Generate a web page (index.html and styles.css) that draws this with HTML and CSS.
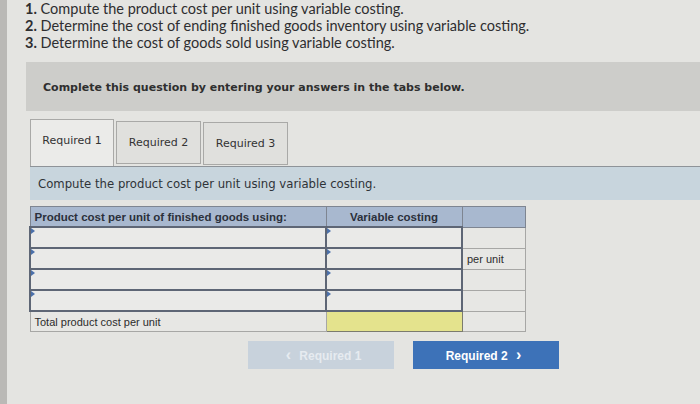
FILE: index.html
```html
<!DOCTYPE html>
<html lang="en">
<head>
    <meta charset="UTF-8">
    <title>Variable Costing</title>
    <link rel="stylesheet" href="styles.css">
</head>
<body>
<div class="page">

    <!-- Question parts -->
    <ol class="parts">
        <li><b>1.</b> Compute the product cost per unit using variable costing.</li>
        <li><b>2.</b> Determine the cost of ending finished goods inventory using variable costing.</li>
        <li><b>3.</b> Determine the cost of goods sold using variable costing.</li>
    </ol>

    <div class="notice">Complete this question by entering your answers in the tabs below.</div>

    <!-- Tabs -->
    <div class="tabs">
        <div class="tab active">Required 1</div>
        <div class="tab tab-2">Required 2</div>
        <div class="tab tab-3">Required 3</div>
    </div>

    <div class="prompt">Compute the product cost per unit using variable costing.</div>

    <!-- Answer table -->
    <table class="answer">
        <tr class="head">
            <th class="c1">Product cost per unit of finished goods using:</th>
            <th class="c2">Variable costing</th>
            <th class="c3"></th>
        </tr>
        <tr>
            <td class="in"></td>
            <td class="in"></td>
            <td class="c3"></td>
        </tr>
        <tr>
            <td class="in"></td>
            <td class="in"></td>
            <td class="c3">per unit</td>
        </tr>
        <tr>
            <td class="in"></td>
            <td class="in"></td>
            <td class="c3"></td>
        </tr>
        <tr>
            <td class="in"></td>
            <td class="in"></td>
            <td class="c3"></td>
        </tr>
        <tr class="total">
            <td class="c1">Total product cost per unit</td>
            <td class="sum"></td>
            <td class="c3"></td>
        </tr>
    </table>

    <!-- Navigation -->
    <div class="nav">
        <button class="prev" disabled><span class="chev">&lsaquo;</span> Required 1</button>
        <button class="next">Required 2 <span class="chev">&rsaquo;</span></button>
    </div>

</div>
</body>
</html>
```

FILE: styles.css
```css
/* General */
body {
    margin: 0;
    background: #e4e4e1;
    color: #2d2d2d;
    font-family: Lato, "Open Sans", sans-serif;
    overflow: hidden;
}

.page {
    border-left: 7px solid #bab9b6;
    height: 404px;
}

/* Question parts */
.parts {
    list-style: none;
    margin: 0;
    padding: 0 0 0 18px;
    font-size: 14.5px;
    line-height: 17px;
    color: #2e2e30;
}

.parts b {
    font-weight: 700;
}

/* Gray notice box */
.notice {
    margin: 11px 0 0 19px;
    height: 49px;
    padding-left: 17px;
    background: #cdcdca;
    font-family: "DejaVu Sans", Verdana, sans-serif;
    font-size: 11px;
    font-weight: bold;
    line-height: 52px;
    color: #2f2f2f;
}

/* Tabs */
.tabs {
    display: flex;
    align-items: flex-end;
    gap: 2px;
    margin: 8px 0 0 23px;
}

.tab {
    box-sizing: border-box;
    width: 85px;
    height: 43px;
    border: 1px solid #a9a9a7;
    background: #e0e0dd;
    font-family: "DejaVu Sans", Verdana, sans-serif;
    font-size: 11px;
    line-height: 42px;
    text-align: center;
    color: #333;
}

.tab.active {
    width: 84px;
    height: 47px;
    border-bottom: none;
    background: #ebebe9;
}

.tab-2 { margin-bottom: 2px; }
.tab-3 { margin-bottom: 1px; }

/* Prompt bar */
.prompt {
    margin-left: 23px;
    height: 33px;
    border-top: 1px solid #8e9398;
    padding-left: 8px;
    background: #c8d5dd;
    font-family: "DejaVu Sans", Verdana, sans-serif;
    font-size: 11.7px;
    line-height: 35px;
    color: #2f3338;
}

/* Answer table */
.answer {
    margin: 6px 0 0 22px;
    width: 497px;
    border-collapse: collapse;
    font-family: "Liberation Sans", Arial, sans-serif;
    font-size: 11px;
    color: #2c2c2c;
    table-layout: fixed;
}

.answer td,
.answer th {
    padding: 0 4px;
    border: 1px solid #a7a7a5;
    height: 19px;
    background: #e7e7e4;
    text-align: left;
}

.answer .c1 { width: 287px; }
.answer .c2 { width: 127px; }

.head th {
    background: #a8b8cf;
    border-color: #7e8591;
    font-weight: bold;
    font-size: 11.5px;
    color: #2b303b;
}

.head th.c2 {
    text-align: center;
}

.answer td.in {
    position: relative;
    border: 2px solid #5e6675;
    background: #eaeae8;
}

.answer td.in::before {
    content: "";
    position: absolute;
    top: 0;
    left: 0;
    border-left: 4px solid #4b70aa;
    border-top: 3px solid transparent;
    border-bottom: 3px solid transparent;
}

.answer td.sum {
    background: #e4e38d;
    border: 1px solid #7b7b6e;
}

/* Navigation buttons */
.nav {
    display: flex;
    gap: 19px;
    margin: 9px 0 0 241px;
}

.nav button {
    width: 146px;
    height: 28px;
    border: none;
    font-family: "Liberation Sans", Arial, sans-serif;
    font-size: 12px;
    font-weight: bold;
    cursor: pointer;
}

.prev {
    background: #c8d2dc;
    color: #e6ebf0;
}

.next {
    background: #3d72b8;
    color: #fff;
}

.chev {
    font-size: 16px;
    padding: 0 5px;
}
```
